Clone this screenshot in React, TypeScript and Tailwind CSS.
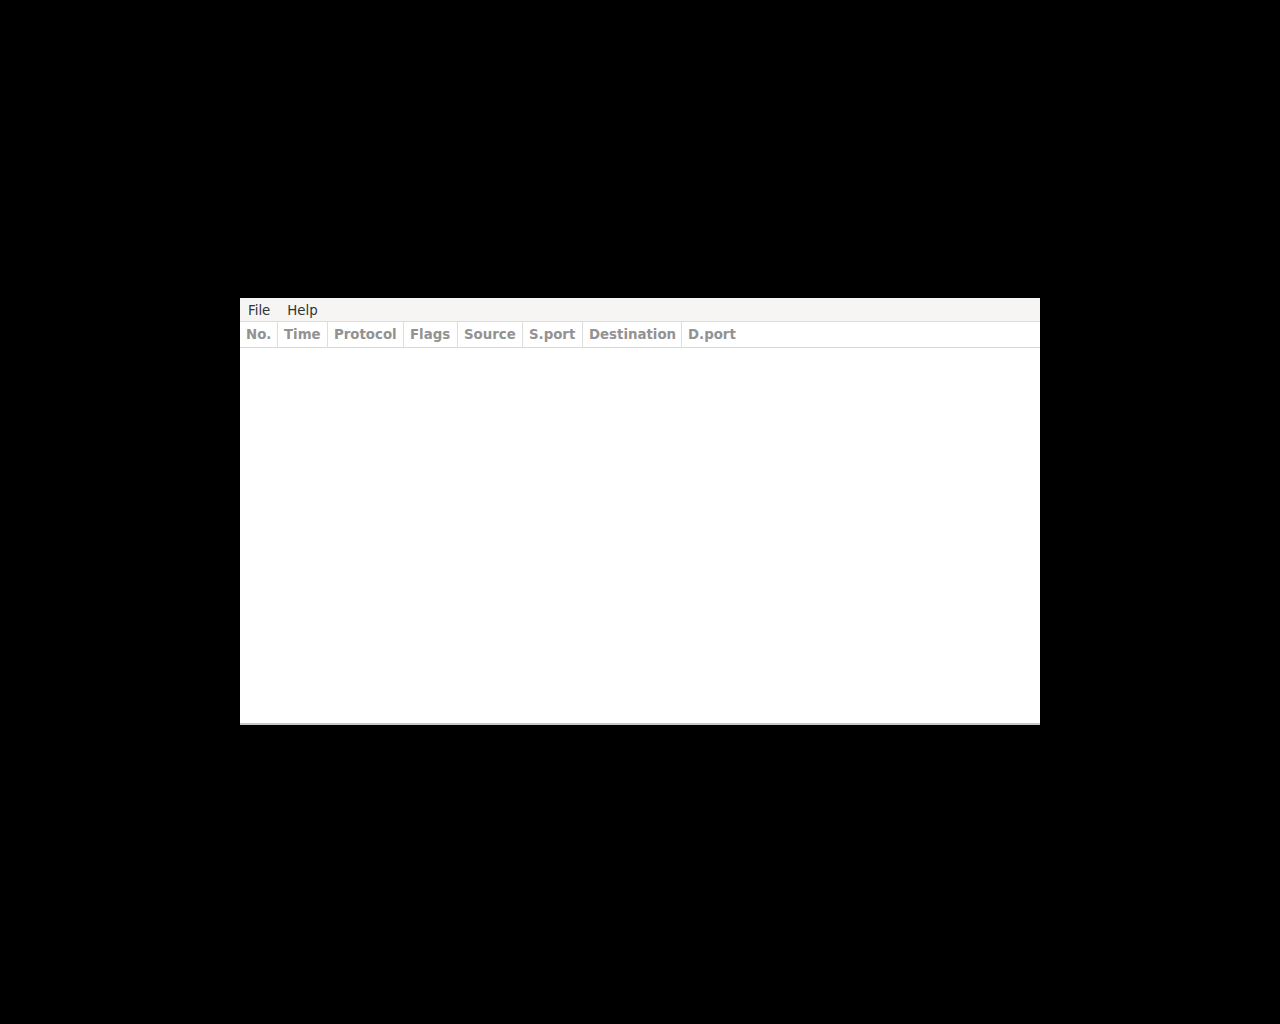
const columns = [
  { label: 'No.', width: 'w-[38px]' },
  { label: 'Time', width: 'w-[50px]' },
  { label: 'Protocol', width: 'w-[76px]' },
  { label: 'Flags', width: 'w-[54px]' },
  { label: 'Source', width: 'w-[65px]' },
  { label: 'S.port', width: 'w-[60px]' },
  { label: 'Destination', width: 'w-[99px]' },
  { label: 'D.port', width: 'w-[70px]' },
]

export default function App() {
  return (
    <div className="w-[1280px] h-[1024px] bg-black flex items-start justify-center pt-[298px] font-['DejaVu_Sans',sans-serif] text-[13.33px]">
      <div className="w-[800px] h-[427px] bg-white flex flex-col">
        {/* menu bar */}
        <div className="h-[24px] bg-[#f6f5f4] border-b border-[#dcdcdc] flex items-center pt-[2px] px-[1px] gap-[3px] text-[#2e3436]">
          <span className="px-[7px]">File</span>
          <span className="px-[7px]">Help</span>
        </div>

        {/* column headers */}
        <div className="h-[26px] flex border-b border-[#d8d8d8] font-bold text-[#929292]">
          {columns.map((c, i) => (
            <div
              key={c.label}
              className={`${c.width} flex items-center pl-[6px] shrink-0 ${i < columns.length - 1 ? 'border-r border-[#dedede]' : ''}`}
            >
              {c.label}
            </div>
          ))}
        </div>

        {/* packet list (empty) */}
        <div className="flex-1 bg-white" />
        <div className="h-[2px] bg-[#c6c6c6]" />
      </div>
    </div>
  )
}
